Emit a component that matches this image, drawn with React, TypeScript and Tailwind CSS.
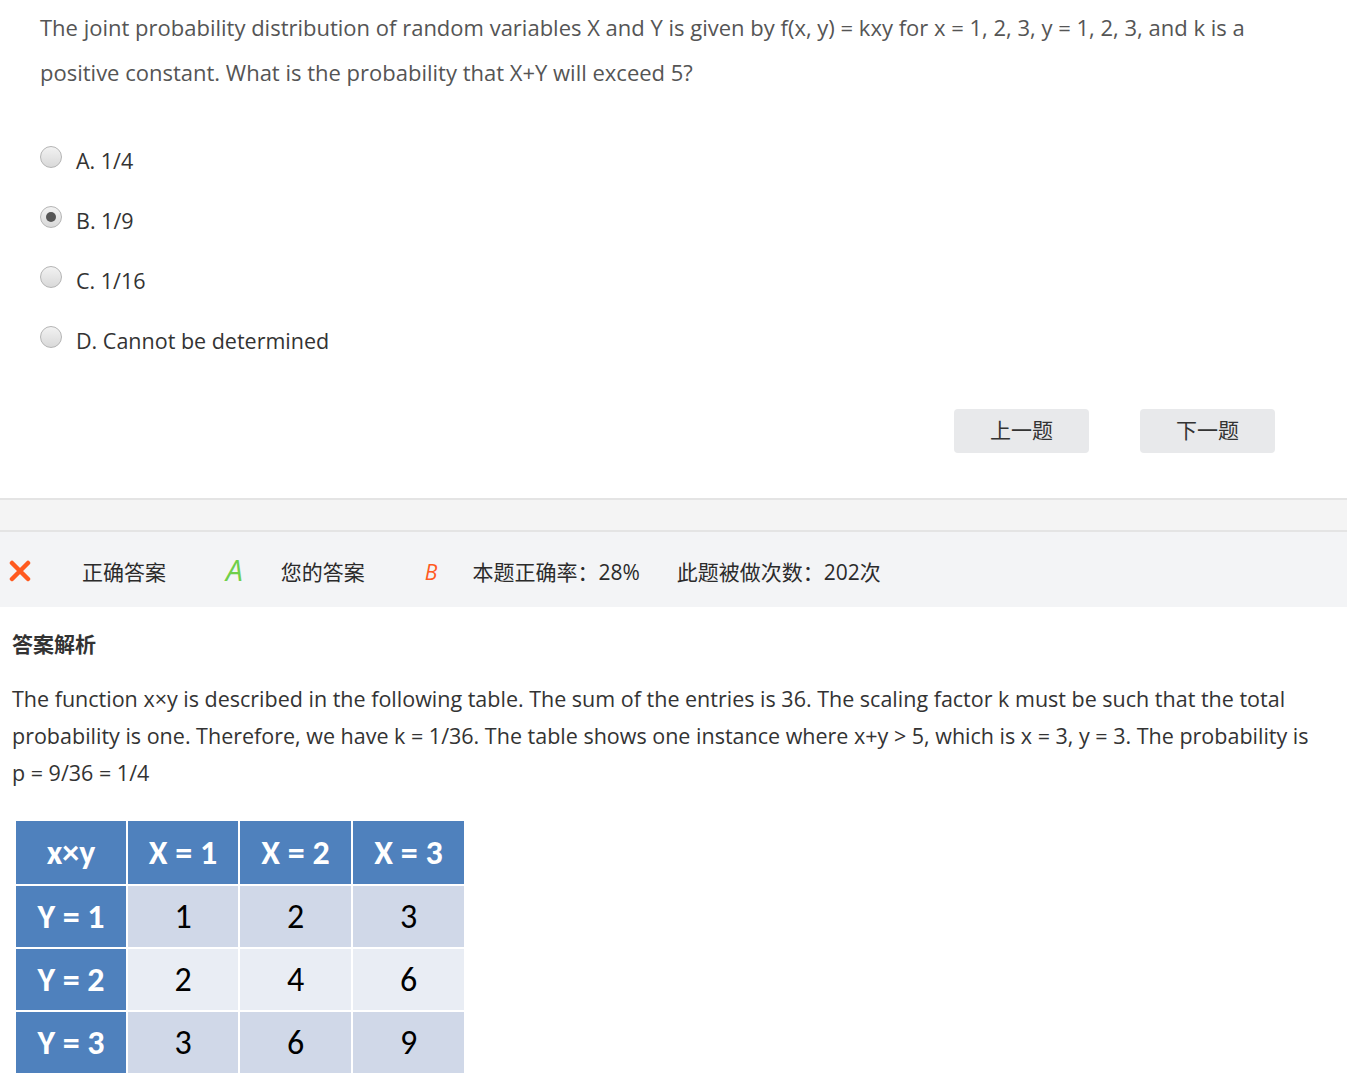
import React from 'react'

const font = { fontFamily: '"Open Sans", "Noto Sans CJK SC", sans-serif' }

const options = [
  { key: 'A', label: 'A. 1/4' },
  { key: 'B', label: 'B. 1/9' },
  { key: 'C', label: 'C. 1/16' },
  { key: 'D', label: 'D. Cannot be determined' },
]

function Radio({ checked }: { checked: boolean }) {
  return (
    <span className="flex h-[22px] w-[22px] shrink-0 items-center justify-center rounded-full border border-[#b5b5b5] bg-gradient-to-b from-[#f2f2f2] to-[#d9d9d9]">
      {checked && <span className="h-[10px] w-[10px] rounded-full bg-[#555]" />}
    </span>
  )
}

const rows = [
  ['Y = 1', '1', '2', '3'],
  ['Y = 2', '2', '4', '6'],
  ['Y = 3', '3', '6', '9'],
]

function ProductTable() {
  const tableFont = { fontFamily: '"Carlito", "Liberation Sans", "Open Sans", sans-serif' }
  return (
    <div className="grid w-[448px] grid-cols-[110px_110px_111px_111px] gap-[2px] text-[34px]" style={tableFont}>
      {['x×y', 'X = 1', 'X = 2', 'X = 3'].map((h) => (
        <div key={h} className="flex h-[63px] items-center justify-center bg-[#4f81bd] font-bold text-white">
          {h}
        </div>
      ))}
      {rows.map((r, i) =>
        r.map((c, j) => (
          <div
            key={`${i}-${j}`}
            className={`flex h-[61px] items-center justify-center ${
              j === 0 ? 'bg-[#4f81bd] font-bold text-white' : i === 1 ? 'bg-[#e9edf4] text-black' : 'bg-[#d0d8e8] text-black'
            }`}
          >
            {c}
          </div>
        ))
      )}
    </div>
  )
}

export default function App() {
  return (
    <div className="min-h-screen bg-white text-[#333]" style={font}>
      <div className="px-[40px] pt-[5px]">
        <p className="max-w-[1230px] text-[22px] leading-[45px] text-[#555]">
          The joint probability distribution of random variables X and Y is given by f(x, y) = kxy for x = 1, 2, 3, y = 1, 2, 3, and k is a
          positive constant. What is the probability that X+Y will exceed 5?
        </p>
        <div className="mt-[51px] flex flex-col gap-[38px]">
          {options.map((o) => (
            <label key={o.key} className="flex h-[22px] items-center gap-[14px] text-[21.5px] text-[#333]">
              <Radio checked={o.key === 'B'} />
              <span className="mt-[9px]">{o.label}</span>
            </label>
          ))}
        </div>
        <div className="mt-[61px] flex justify-end gap-[51px] pr-[32px]">
          <button className="h-[44px] w-[135px] rounded-[4px] bg-[#e8e9eb] text-[21px] text-[#333]">上一题</button>
          <button className="h-[44px] w-[135px] rounded-[4px] bg-[#e8e9eb] text-[21px] text-[#333]">下一题</button>
        </div>
      </div>

      <div className="mt-[45px] h-[34px] border-y-2 border-[#e4e4e4] bg-[#f4f4f4]" />

      <div className="flex h-[75px] items-center bg-[#f3f4f6] pl-[9px] pt-[6px] text-[21px] text-[#2b2b2b]">
        <svg width="22" height="22" viewBox="0 0 22 22" className="mt-[-4px]">
          <path d="M3 3 L19 19 M19 3 L3 19" stroke="#ff5a1f" strokeWidth="4.5" strokeLinecap="round" />
        </svg>
        <span className="ml-[51px]">正确答案</span>
        <span className="ml-[60px] mt-[-6px] text-[30px] italic text-[#6fcf4a]">A</span>
        <span className="ml-[38px]">您的答案</span>
        <span className="ml-[60px] text-[21px] italic text-[#ff5a1f]">B</span>
        <span className="ml-[35px]">本题正确率：28%</span>
        <span className="ml-[37px]">此题被做次数：202次</span>
      </div>

      <div className="px-[12px]">
        <h3 className="mt-[22px] text-[21px] font-bold text-[#333]">答案解析</h3>
        <p className="mt-[19px] max-w-[1310px] text-[21.5px] leading-[37px] text-[#333]">
          The function x×y is described in the following table. The sum of the entries is 36. The scaling factor k must be such that the total
          probability is one. Therefore, we have k = 1/36. The table shows one instance where x+y &gt; 5, which is x = 3, y = 3. The probability is
          p = 9/36 = 1/4
        </p>
        <div className="mt-[30px] pl-[4px]">
          <ProductTable />
        </div>
      </div>
    </div>
  )
}
